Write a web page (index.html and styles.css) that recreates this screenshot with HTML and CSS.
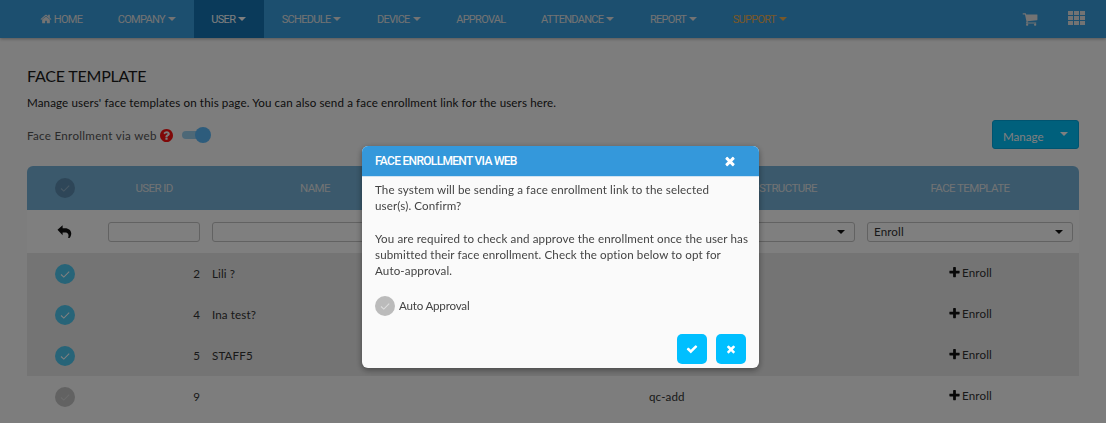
FILE: index.html
```html
<!DOCTYPE html>
<html lang="en">
<head>
<meta charset="utf-8">
<title>Face Template</title>
<link rel="stylesheet" href="styles.css">
</head>
<body>
<svg class="defs" aria-hidden="true">
  <symbol id="i-check" viewBox="0 0 1792 1792"><path d="M1671 566q0 40-28 68l-724 724-136 136q-28 28-68 28t-68-28l-136-136-362-362q-28-28-28-68t28-68l136-136q28-28 68-28t68 28l294 295 656-657q28-28 68-28t68 28l136 136q28 28 28 68z"/></symbol>
  <symbol id="i-times" viewBox="0 0 1792 1792"><path d="M1490 1322q0 40-28 68l-136 136q-28 28-68 28t-68-28l-294-294-294 294q-28 28-68 28t-68-28l-136-136q-28-28-28-68t28-68l294-294-294-294q-28-28-28-68t28-68l136-136q28-28 68-28t68 28l294 294 294-294q28-28 68-28t68 28l136 136q28 28 28 68t-28 68l-294 294 294 294q28 28 28 68z"/></symbol>
  <symbol id="i-plus" viewBox="0 0 1792 1792"><path d="M1600 736v192q0 40-28 68t-68 28h-416v416q0 40-28 68t-68 28h-192q-40 0-68-28t-28-68v-416h-416q-40 0-68-28t-28-68v-192q0-40 28-68t68-28h416v-416q0-40 28-68t68-28h192q40 0 68 28t28 68v416h416q40 0 68 28t28 68z"/></symbol>
  <symbol id="i-tick" viewBox="0 0 20 20"><path d="M6 10.5l2.8 2.6L14.2 7.6" fill="none" stroke="currentColor" stroke-width="1.1"/></symbol>
</svg>

<header class="navbar">
  <nav class="nav-menu">
    <a class="nav-item"><svg class="nav-home" viewBox="0 0 1792 1792"><path d="M1472 992v480q0 26-19 45t-45 19h-384v-384h-256v384h-384q-26 0-45-19t-19-45v-480q0-1 .5-3t.5-3l575-474 575 474q1 2 1 6zm223-69l-62 74q-8 9-21 11h-3q-13 0-21-7l-692-577-692 577q-12 8-24 7-13-2-21-11l-62-74q-8-10-7-23.5t11-21.5l719-599q32-26 76-26t76 26l244 204v-195q0-14 9-23t23-9h192q14 0 23 9t9 23v408l219 182q10 8 11 21.5t-7 23.5z"/></svg>HOME</a>
    <a class="nav-item">COMPANY<span class="caret"></span></a>
    <a class="nav-item active">USER<span class="caret"></span></a>
    <a class="nav-item">SCHEDULE<span class="caret"></span></a>
    <a class="nav-item">DEVICE<span class="caret"></span></a>
    <a class="nav-item">APPROVAL</a>
    <a class="nav-item">ATTENDANCE<span class="caret"></span></a>
    <a class="nav-item">REPORT<span class="caret"></span></a>
    <a class="nav-item support">SUPPORT<span class="caret"></span></a>
  </nav>
  <div class="nav-tools">
    <svg class="nav-cart" viewBox="0 0 1792 1792"><path d="M704 1536q0 52-38 90t-90 38-90-38-38-90 38-90 90-38 90 38 38 90zm896 0q0 52-38 90t-90 38-90-38-38-90 38-90 90-38 90 38 38 90zm128-1088v512q0 24-16.5 42.5t-40.5 21.5l-1044 122q13 60 13 70 0 16-24 64h920q26 0 45 19t19 45-19 45-45 19h-1024q-26 0-45-19t-19-45q0-11 8-31.5t16-36 21.5-40 15.5-29.5l-177-823h-204q-26 0-45-19t-19-45 19-45 45-19h256q16 0 28.5 6.5t19.5 15.5 13 24.5 8 26 5.5 29.5 4.5 26h1201q26 0 45 19t19 45z"/></svg>
    <div class="apps"><i></i><i></i><i></i><i></i><i></i><i></i><i></i><i></i><i></i></div>
  </div>
</header>

<main class="page">
  <h1 class="title">FACE TEMPLATE</h1>
  <p class="desc">Manage users' face templates on this page. You can also send a face enrollment link for the users here.</p>
  <div class="toolbar">
    <div class="toggle-group">
      <span class="toggle-label">Face Enrollment via web</span>
      <svg class="help" viewBox="128 128 1536 1536"><path d="M1024 1376v-192q0-14-9-23t-23-9h-192q-14 0-23 9t-9 23v192q0 14 9 23t23 9h192q14 0 23-9t9-23zm256-672q0-88-55.5-163t-138.5-116-170-41q-243 0-371 213-15 24 8 42l132 100q7 6 19 6 16 0 25-12 53-68 86-92 34-24 86-24 48 0 85.5 26t37.5 59q0 38-20 61t-68 45q-63 28-115.5 86.5t-52.5 125.5v36q0 14 9 23t23 9h192q14 0 23-9t9-23q0-19 21.5-49.5t54.5-49.5q32-18 49-28.5t46-35 44.5-48 28-60.5 12.5-81zm384 192q0 209-103 385.5t-279.5 279.5-385.5 103-385.5-103-279.5-279.5-103-385.5 103-385.5 279.5-279.5 385.5-103 385.5 103 279.5 279.5 103 385.5z"/></svg>
      <span class="switch"><span class="knob"></span></span>
    </div>
    <button class="manage"><span>Manage</span><span class="caret"></span></button>
  </div>

  <table class="grid">
    <colgroup><col class="c-check"><col class="c-id"><col class="c-wide"><col class="c-dept"><col class="c-wide"><col></colgroup>
    <thead>
      <tr>
        <th><span class="tick tick-head"><svg><use href="#i-tick"/></svg></span></th>
        <th>USER ID</th>
        <th>NAME</th>
        <th></th>
        <th class="th-end">STRUCTURE</th>
        <th>FACE TEMPLATE</th>
      </tr>
    </thead>
    <tbody>
      <tr class="filters">
        <td class="center"><svg class="undo" viewBox="0 0 16 16"><path d="M.5 6.2L6 1.4v3h2.6c4 0 6.6 2.4 6.6 5.7 0 2-.8 3.6-1.9 4.9h-1.5c.5-1.3.7-2.8.2-4-.5-1.3-1.7-2-3.3-2H6v3z"/></svg></td>
        <td><div class="field"></div></td>
        <td><div class="field"></div></td>
        <td><div class="field"></div></td>
        <td><div class="field"><span class="select-arrow"></span></div></td>
        <td><div class="field">Enroll<span class="select-arrow"></span></div></td>
      </tr>
      <tr class="selected">
        <td class="center"><span class="tick tick-on"><svg><use href="#i-tick"/></svg></span></td>
        <td class="num">2</td><td>Lili ?</td><td></td><td></td>
        <td class="center"><span class="enroll"><svg><use href="#i-plus"/></svg>Enroll</span></td>
      </tr>
      <tr class="selected">
        <td class="center"><span class="tick tick-on"><svg><use href="#i-tick"/></svg></span></td>
        <td class="num">4</td><td>Ina test?</td><td></td><td></td>
        <td class="center"><span class="enroll"><svg><use href="#i-plus"/></svg>Enroll</span></td>
      </tr>
      <tr class="selected">
        <td class="center"><span class="tick tick-on"><svg><use href="#i-tick"/></svg></span></td>
        <td class="num">5</td><td>STAFF5</td><td></td><td></td>
        <td class="center"><span class="enroll"><svg><use href="#i-plus"/></svg>Enroll</span></td>
      </tr>
      <tr>
        <td class="center"><span class="tick tick-off"><svg><use href="#i-tick"/></svg></span></td>
        <td class="num">9</td><td></td><td></td><td>qc-add</td>
        <td class="center"><span class="enroll"><svg><use href="#i-plus"/></svg>Enroll</span></td>
      </tr>
    </tbody>
  </table>
</main>

<div class="overlay"></div>

<section class="modal">
  <header class="modal-head">
    <span>FACE ENROLLMENT VIA WEB</span>
    <svg class="modal-close"><use href="#i-times"/></svg>
  </header>
  <div class="modal-body">
    <p>The system will be sending a face enrollment link to the selected<br>user(s). Confirm?</p>
    <p>You are required to check and approve the enrollment once the user has submitted their face enrollment. Check the option below to opt for Auto-approval.</p>
    <label class="auto"><span class="tick tick-modal"><svg><use href="#i-tick"/></svg></span>Auto Approval</label>
  </div>
  <footer class="modal-foot">
    <button class="act"><svg><use href="#i-check"/></svg></button>
    <button class="act"><svg><use href="#i-times"/></svg></button>
  </footer>
</section>
</body>
</html>
```

FILE: styles.css
```css
* { box-sizing: border-box; }
html, body { height: 100%; }
body {
  margin: 0;
  height: 423px;
  overflow: hidden;
  background: #fafafa;
  color: #222;
  font-family: "Lato", "Noto Sans", sans-serif;
  font-size: 12px;
}
.defs { display: none; }
p { margin: 0; }

/* nav */
.navbar {
  display: flex;
  justify-content: space-between;
  height: 38px;
  background: #389ede;
  box-shadow: 0 1px 3px rgba(0,0,0,.3);
  padding-left: 22px;
}
.nav-menu { display: flex; }
.nav-item {
  display: flex;
  align-items: center;
  padding: 0 17.75px;
  color: #e6e6e6;
  font-family: "Roboto", sans-serif;
  font-size: 11px;
  letter-spacing: -.7px;
  white-space: nowrap;
}
.nav-item.active { background: #1474b4; color: #fff; }
.nav-item.support { color: #f0b050; }
.nav-home { width: 12px; height: 12px; fill: currentColor; margin-right: 2px; }
.caret {
  display: inline-block;
  width: 0;
  height: 0;
  margin-left: 3px;
  border-left: 4px solid transparent;
  border-right: 4px solid transparent;
  border-top: 4px solid currentColor;
}
.nav-tools { display: flex; align-items: center; gap: 30px; padding-right: 21px; }
.nav-cart { width: 16px; height: 16px; fill: #e6e6e6; }
.apps { display: grid; grid-template-columns: repeat(3, 5px); grid-auto-rows: 4px; gap: 1px; margin-bottom: 2px; }
.apps i { background: #e6e6e6; }

/* page */
.page { padding: 28px 27px 0; }
.title { margin: 0; font-size: 16px; font-weight: 400; line-height: 20px; letter-spacing: -.2px; color: #1a1a1a; }
.desc { margin-top: 9px; font-size: 11.6px; line-height: 16px; letter-spacing: .12px; color: #1a1a1a; }
.toolbar { display: flex; justify-content: space-between; margin-top: 12px; height: 43px; }
.toggle-group { display: flex; align-items: center; height: 24px; }
.toggle-label { font-size: 11.6px; letter-spacing: .3px; color: #555; }
.help { width: 13px; height: 13px; fill: #ff1010; margin-left: 3px; }
.switch { position: relative; display: block; width: 24px; height: 8px; margin-left: 9px; border-radius: 4px; background: #9bd0ef; }
.knob { position: absolute; right: -5px; top: -4px; width: 16px; height: 16px; border-radius: 50%; background: #5ab8f8; }
.manage {
  display: flex;
  align-items: center;
  justify-content: space-between;
  width: 87px;
  height: 29px;
  margin: -3px 0 0;
  padding: 3px 10px 0;
  border: 1px solid #00a8e0;
  border-radius: 3px;
  background: #00c0f8;
  color: #fff;
  font-family: inherit;
  font-size: 11.6px;
}
.manage .caret { margin-bottom: 5px; }

/* table */
.grid { width: 1052px; border-collapse: collapse; table-layout: fixed; }
.c-check { width: 75px; }
.c-id { width: 104px; }
.c-wide { width: 218px; }
.c-dept { width: 219px; }
.grid thead tr { height: 44px; background: #76b2d8; }
.grid th { font-weight: 400; color: #e2e6e8; padding-bottom: 2px; font-family: "Roboto", sans-serif; font-size: 11.5px; letter-spacing: -.6px; }
.grid .th-end { text-align: right; padding-right: 44px; }
.grid th:first-child { border-top-left-radius: 6px; }
.grid th:last-child { border-top-right-radius: 6px; }
.grid td { padding: 0 6px; height: 41px; font-size: 11.6px; letter-spacing: .12px; color: #333; }
.grid .filters td { height: 43px; background: #fefefe; }
.grid .selected td { background: #e8e8e8; }
.center { text-align: center; }
.num { text-align: right; }
.field {
  position: relative;
  height: 20px;
  line-height: 18px;
  padding-left: 6px;
  border: 1px solid #c4c4c4;
  border-radius: 3px;
  background: #fefefe;
}
.select-arrow {
  position: absolute;
  right: 9px;
  top: 7px;
  border-left: 4px solid transparent;
  border-right: 4px solid transparent;
  border-top: 4px solid #111;
}
.undo { display: block; width: 15px; height: 15px; margin: 0 auto; fill: #111; }
.tick { display: inline-flex; width: 20px; height: 20px; border-radius: 50%; vertical-align: middle; }
.tick svg { width: 20px; height: 20px; }
.tick-head { background: #5c8db0; color: #8fb0c8; }
.tick-on { background: #4fc8f0; color: #fff; }
.tick-off { background: #c4c4c4; color: #d8d8d8; }
.tick-modal { background: #bbb; color: #ddd; margin-right: 4px; }
.enroll { display: inline-flex; align-items: center; }
.enroll svg { width: 13px; height: 13px; fill: #111; margin-right: 1px; }

/* modal */
.overlay { position: fixed; inset: 0; background: rgba(0,0,0,.5); }
.modal {
  position: fixed;
  left: 362px;
  top: 146px;
  width: 397px;
  height: 222px;
  border-radius: 6px;
  background: #fafafa;
  box-shadow: 0 2px 6px rgba(0,0,0,.4);
  overflow: hidden;
}
.modal-head {
  display: flex;
  align-items: center;
  justify-content: space-between;
  height: 31px;
  padding: 0 22px 0 13px;
  background: #3498db;
  border-bottom: 1px solid #cfe3f2;
  color: #fff;
  font-family: "Roboto", sans-serif;
  font-size: 12px;
  font-weight: 500;
  letter-spacing: -.7px;
}
.modal-close { width: 14px; height: 14px; fill: #fff; }
.modal-body { padding: 5px 8px 0 13px; font-size: 11.6px; line-height: 16px; letter-spacing: .12px; color: #444; }
.modal-body p + p { margin-top: 17px; }
.auto { display: flex; align-items: center; margin-top: 17px; letter-spacing: -.2px; }
.modal-foot { position: absolute; right: 13px; bottom: 4px; display: flex; gap: 9px; }
.act {
  display: flex;
  align-items: center;
  justify-content: center;
  width: 30px;
  height: 30px;
  padding: 0;
  border: 0;
  border-radius: 5px;
  background: #00bfff;
}
.act svg { width: 12px; height: 12px; fill: #fff; }
```
